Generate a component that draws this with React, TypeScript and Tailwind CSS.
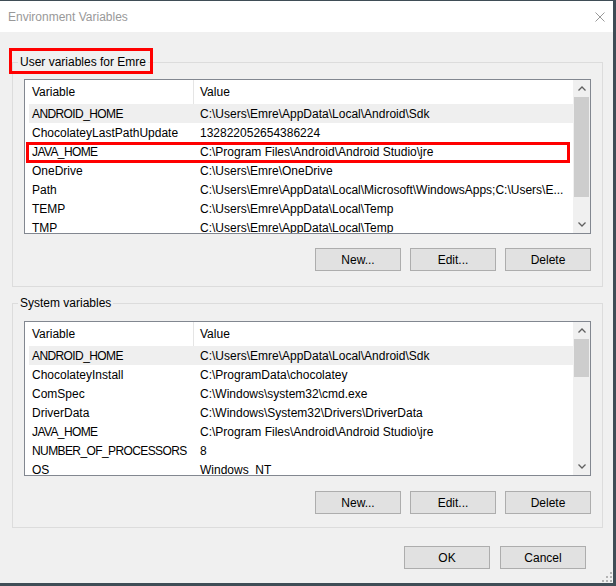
import type { ReactNode } from 'react';

type EnvRow = { name: string; value: string };

const userRows: EnvRow[] = [
  { name: 'ANDROID_HOME', value: 'C:\\Users\\Emre\\AppData\\Local\\Android\\Sdk' },
  { name: 'ChocolateyLastPathUpdate', value: '132822052654386224' },
  { name: 'JAVA_HOME', value: 'C:\\Program Files\\Android\\Android Studio\\jre' },
  { name: 'OneDrive', value: 'C:\\Users\\Emre\\OneDrive' },
  { name: 'Path', value: 'C:\\Users\\Emre\\AppData\\Local\\Microsoft\\WindowsApps;C:\\Users\\E...' },
  { name: 'TEMP', value: 'C:\\Users\\Emre\\AppData\\Local\\Temp' },
  { name: 'TMP', value: 'C:\\Users\\Emre\\AppData\\Local\\Temp' },
];

const systemRows: EnvRow[] = [
  { name: 'ANDROID_HOME', value: 'C:\\Users\\Emre\\AppData\\Local\\Android\\Sdk' },
  { name: 'ChocolateyInstall', value: 'C:\\ProgramData\\chocolatey' },
  { name: 'ComSpec', value: 'C:\\Windows\\system32\\cmd.exe' },
  { name: 'DriverData', value: 'C:\\Windows\\System32\\Drivers\\DriverData' },
  { name: 'JAVA_HOME', value: 'C:\\Program Files\\Android\\Android Studio\\jre' },
  { name: 'NUMBER_OF_PROCESSORS', value: '8' },
  { name: 'OS', value: 'Windows_NT' },
];

// Arial caps run wider than Segoe UI, so all-caps names get a little tighter tracking
const isCaps = (s: string) => s.length > 4 && s === s.toUpperCase();

function Chevron({ up }: { up?: boolean }) {
  return (
    <svg width="8" height="5" viewBox="0 0 8 5" className="block">
      <polyline
        points={up ? '0.5,4.5 4,1 7.5,4.5' : '0.5,0.5 4,4 7.5,0.5'}
        fill="none"
        stroke="#606060"
        strokeWidth="1.3"
      />
    </svg>
  );
}

function Scrollbar({ thumb }: { thumb: number }) {
  return (
    <div className="flex w-[17px] shrink-0 flex-col bg-[#f0f0f0]">
      <div className="flex h-[17px] items-center justify-center">
        <Chevron up />
      </div>
      <div className="mx-px bg-[#cdcdcd]" style={{ height: thumb }} />
      <div className="flex-1" />
      <div className="flex h-[17px] items-center justify-center">
        <Chevron />
      </div>
    </div>
  );
}

function ListView({
  rows,
  thumb,
  marked,
}: {
  rows: EnvRow[];
  thumb: number;
  marked?: boolean;
}) {
  return (
    <div className="relative flex h-[155px] w-[567px] overflow-hidden border border-[#828790] bg-white">
      <div className="min-w-0 flex-1">
        <div className="flex h-[24px] items-center">
          <div className="flex h-full w-[169px] items-center border-r border-[#e5e5e5] pl-[7px]">
            Variable
          </div>
          <div className="pl-[6px]">Value</div>
        </div>
        {rows.map((row, i) => (
          <div
            key={row.name}
            className={`ml-[4px] flex h-[19px] items-center whitespace-nowrap ${
              i === 0 ? 'bg-[#efefef]' : ''
            }`}
          >
            <div
              className={`w-[165px] shrink-0 overflow-hidden pl-[3px] ${
                isCaps(row.name) ? 'tracking-[-0.6px]' : ''
              }`}
            >
              {row.name}
            </div>
            <div className="pl-[6px]">{row.value}</div>
          </div>
        ))}
      </div>
      <Scrollbar thumb={thumb} />
      {marked && (
        <div className="absolute left-[1px] top-[62px] h-[21px] w-[544px] border-[3px] border-[#ff0000]" />
      )}
    </div>
  );
}

function Button({ children }: { children: ReactNode }) {
  return (
    <button
      type="button"
      className="h-[23px] w-[86px] border border-[#adadad] bg-[#e1e1e1] text-black"
    >
      {children}
    </button>
  );
}

function GroupBox({
  title,
  marked,
  className,
  children,
}: {
  title: string;
  marked?: boolean;
  className?: string;
  children: ReactNode;
}) {
  return (
    <fieldset className={`w-[591px] border border-[#dcdcdc] px-[11px] ${className ?? ''}`}>
      <legend className="relative ml-[-6px] px-[2px] leading-[16px]">
        {title}
        {marked && (
          <span className="absolute -left-[9px] -top-[6px] h-[26px] w-[144px] border-[3px] border-[#ff0000]" />
        )}
      </legend>
      {children}
    </fieldset>
  );
}

export default function App() {
  return (
    <div className="h-[586px] w-[616px] overflow-hidden bg-[#3f4d56] pt-px font-['Liberation_Sans',Arial,sans-serif] text-[12px] text-black">
      <div className="relative flex h-[582px] w-[613px] flex-col bg-[#f0f0f0]">
        <header className="flex h-[31px] shrink-0 items-center justify-between bg-white pl-[8px] pr-[8px]">
          <span className="text-[#999999]">Environment Variables</span>
          <svg width="10" height="10" viewBox="0 0 10 10">
            <path d="M0.5 0.5 L9.5 9.5 M9.5 0.5 L0.5 9.5" stroke="#999999" strokeWidth="1" />
          </svg>
        </header>

        <main className="flex flex-col pl-[12px] pt-[22px]">
          <GroupBox title="User variables for Emre" marked className="pb-[15px]">
            <div className="pt-[9px]">
              <ListView rows={userRows} thumb={100} marked />
            </div>
            <div className="mt-[14px] flex justify-end gap-[9px]">
              <Button>New...</Button>
              <Button>Edit...</Button>
              <Button>Delete</Button>
            </div>
          </GroupBox>

          <GroupBox title="System variables" className="mt-[8px] pb-[13px]">
            <div className="pt-[10px]">
              <ListView rows={systemRows} thumb={38} />
            </div>
            <div className="mt-[15px] flex justify-end gap-[9px]">
              <Button>New...</Button>
              <Button>Edit...</Button>
              <Button>Delete</Button>
            </div>
          </GroupBox>

          <footer className="mt-[18px] flex justify-end gap-[10px] pr-[27px]">
            <Button>OK</Button>
            <Button>Cancel</Button>
          </footer>
        </main>

        <svg
          width="10"
          height="10"
          viewBox="0 0 10 10"
          className="absolute bottom-[1px] right-[1px]"
        >
          <rect x="8" y="0" width="2" height="2" fill="#b4b4b4" />
          <rect x="4" y="4" width="2" height="2" fill="#b4b4b4" />
          <rect x="8" y="4" width="2" height="2" fill="#b4b4b4" />
          <rect x="0" y="8" width="2" height="2" fill="#b4b4b4" />
          <rect x="4" y="8" width="2" height="2" fill="#b4b4b4" />
          <rect x="8" y="8" width="2" height="2" fill="#b4b4b4" />
        </svg>
      </div>
    </div>
  );
}
